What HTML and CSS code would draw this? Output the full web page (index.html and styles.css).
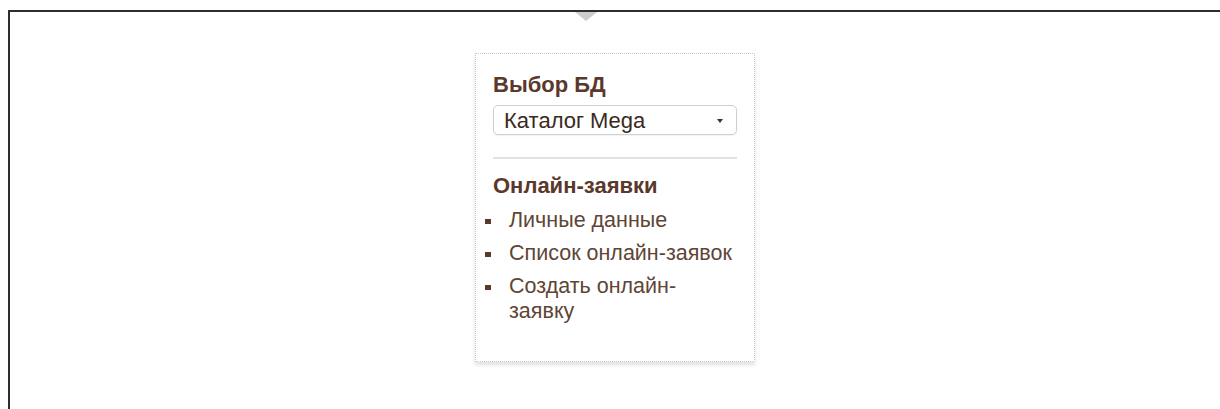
FILE: index.html
```html
<!DOCTYPE html>
<html lang="ru">
<head>
<meta charset="utf-8">
<title>Онлайн-заявки</title>
<link rel="stylesheet" href="styles.css">
</head>
<body>
<div class="frame">
  <span class="notch"></span>
  <aside class="sidebar">
    <h3 class="sidebar-title">Выбор БД</h3>
    <div class="select">
      <span class="select-value">Каталог Mega</span>
      <span class="select-caret"></span>
    </div>
    <hr class="divider">
    <h3 class="sidebar-title sidebar-title--list">Онлайн-заявки</h3>
    <ul class="nav-list">
      <li><a href="#">Личные данные</a></li>
      <li><a href="#">Список онлайн-заявок</a></li>
      <li><a href="#">Создать онлайн-<br>заявку</a></li>
    </ul>
  </aside>
</div>
</body>
</html>
```

FILE: styles.css
```css
html, body {
  margin: 0;
  padding: 0;
  background: #fff;
  overflow: hidden;
}

body {
  font-family: "Liberation Sans", Arial, sans-serif;
  color: #333;
}

.frame {
  position: relative;
  margin: 10px 0 0 8px;
  border-top: 2px solid #2e2e2e;
  border-left: 2px solid #2e2e2e;
  height: calc(100vh - 10px);
  box-sizing: border-box;
}

/* small grey pointer hanging from the top edge */
.notch {
  position: absolute;
  top: 0;
  left: 565px;
  width: 0;
  height: 0;
  border-left: 11px solid transparent;
  border-right: 11px solid transparent;
  border-top: 9px solid #cdcdcd;
}

.sidebar {
  width: 244px;
  margin: 41px auto 0;
  padding: 19px 17px 33px;
  border: 1px dotted #c9c9c9;
  box-shadow: 0 3px 4px rgba(0, 0, 0, 0.12);
}

.sidebar-title {
  margin: 0 0 8px;
  font-size: 22px;
  line-height: 24px;
  font-weight: bold;
  color: #5a382b;
}

.sidebar-title--list {
  margin-bottom: 6px;
}

.select {
  display: flex;
  align-items: center;
  justify-content: space-between;
  height: 30px;
  box-sizing: border-box;
  padding: 2px 13px 0 10px;
  border: 1px solid #cfcfcf;
  border-radius: 5px;
  background: #fff;
  box-shadow: 0 1px 2px rgba(0, 0, 0, 0.06);
}

.select-value {
  font-size: 22px;
  line-height: 24px;
  color: #3a2a22;
}

.select-caret {
  width: 0;
  height: 0;
  border-left: 3.5px solid transparent;
  border-right: 3.5px solid transparent;
  border-top: 4px solid #333;
}

.divider {
  margin: 22px 0 15px;
  border: 0;
  border-top: 2px solid #e2e2e2;
}

.nav-list {
  list-style: none;
  margin: 0;
  padding: 0 0 0 16px;
}

.nav-list li {
  position: relative;
  padding: 4px 0;
  font-size: 21.5px;
  line-height: 25px;
}

.nav-list li::before {
  content: "";
  position: absolute;
  left: -24px;
  top: 15px;
  width: 6px;
  height: 5px;
  background: #5a382b;
}

.nav-list a {
  color: #5e4536;
  text-decoration: none;
}
```
